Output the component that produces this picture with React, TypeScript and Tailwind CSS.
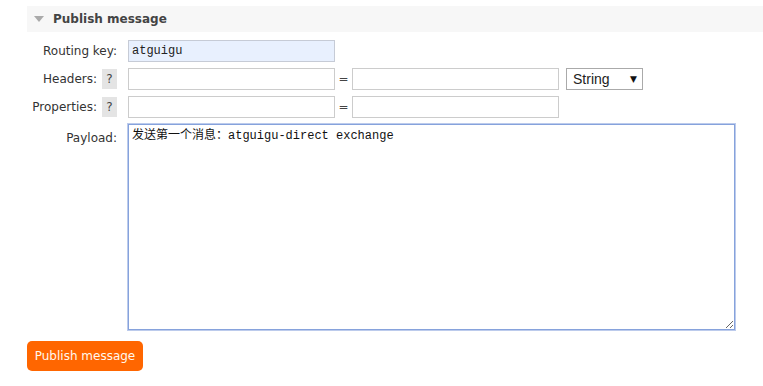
import { useState } from "react";

const LABEL = "w-[90px] shrink-0 flex justify-end items-center gap-[5px] whitespace-nowrap text-[12px] text-[#333]";
const INPUT = "h-[22px] w-[207px] shrink-0 border border-[#ccc] bg-white px-[3px] outline-none";

function Help() {
  return (
    <span className="flex h-[20px] w-[15px] shrink-0 items-center justify-center bg-[#e4e4e4] text-[12px] text-[#444]">
      ?
    </span>
  );
}

function Pair() {
  return (
    <div className="flex items-center">
      <input className={INPUT} />
      <span className="w-[17px] text-center text-[12px] text-[#444]">=</span>
      <input className={INPUT} />
    </div>
  );
}

export default function App() {
  const [routingKey, setRoutingKey] = useState("atguigu");
  const [payload, setPayload] = useState("发送第一个消息：atguigu-direct exchange");

  return (
    <div className="min-h-[386px] w-[763px] bg-white pl-[27px] pt-[6px] font-['DejaVu_Sans',sans-serif] text-[#333]">
      <div className="flex h-[26px] items-center gap-[8px] bg-[#f7f7f7] pl-[6px]">
        <svg width="12" height="8" viewBox="0 0 12 8">
          <path d="M1 1h10L6 7z" fill="#aaa" />
        </svg>
        <span className="text-[12px] font-bold text-[#444]">Publish message</span>
      </div>

      <div className="mt-[8px] flex flex-col gap-[6px]">
        <div className="flex items-center gap-[11px]">
          <label className={LABEL}>Routing key:</label>
          <input
            value={routingKey}
            onChange={(e) => setRoutingKey(e.target.value)}
            className="h-[22px] w-[207px] border border-[#c6cbd6] bg-[#e8f0fe] px-[3px] font-['Liberation_Mono',monospace] text-[12px] text-[#222] outline-none"
          />
        </div>

        <div className="flex h-[22px] items-center gap-[11px]">
          <div className={LABEL}>
            <span>Headers:</span>
            <Help />
          </div>
          <Pair />
          <div className="relative -ml-[4px]">
            <select className="block h-[22px] w-[77px] appearance-none border border-[#aaa] bg-white pl-[6px] font-['Liberation_Sans',sans-serif] text-[14px] text-[#222] outline-none">
              <option>String</option>
              <option>Number</option>
            </select>
            <span className="pointer-events-none absolute right-[6px] top-[5px] text-[9px] text-[#111]">▼</span>
          </div>
        </div>

        <div className="flex h-[22px] items-center gap-[11px]">
          <div className={LABEL}>
            <span>Properties:</span>
            <Help />
          </div>
          <Pair />
        </div>

        <div className="flex items-start gap-[11px]">
          <label className={`${LABEL} pt-[5px]`}>Payload:</label>
          <textarea
            value={payload}
            onChange={(e) => setPayload(e.target.value)}
            className="h-[206px] w-[607px] border border-[#86a2dc] px-[3px] py-[2px] font-['Liberation_Mono','Noto_Sans_CJK_SC',monospace] text-[12px] text-[#111] outline outline-1 outline-[#bccbec]"
          />
        </div>
      </div>

      <button className="mt-[11px] h-[30px] w-[116px] rounded-[5px] bg-[#ff6600] text-[12px] text-[#fff8ee]">
        Publish message
      </button>
    </div>
  );
}
